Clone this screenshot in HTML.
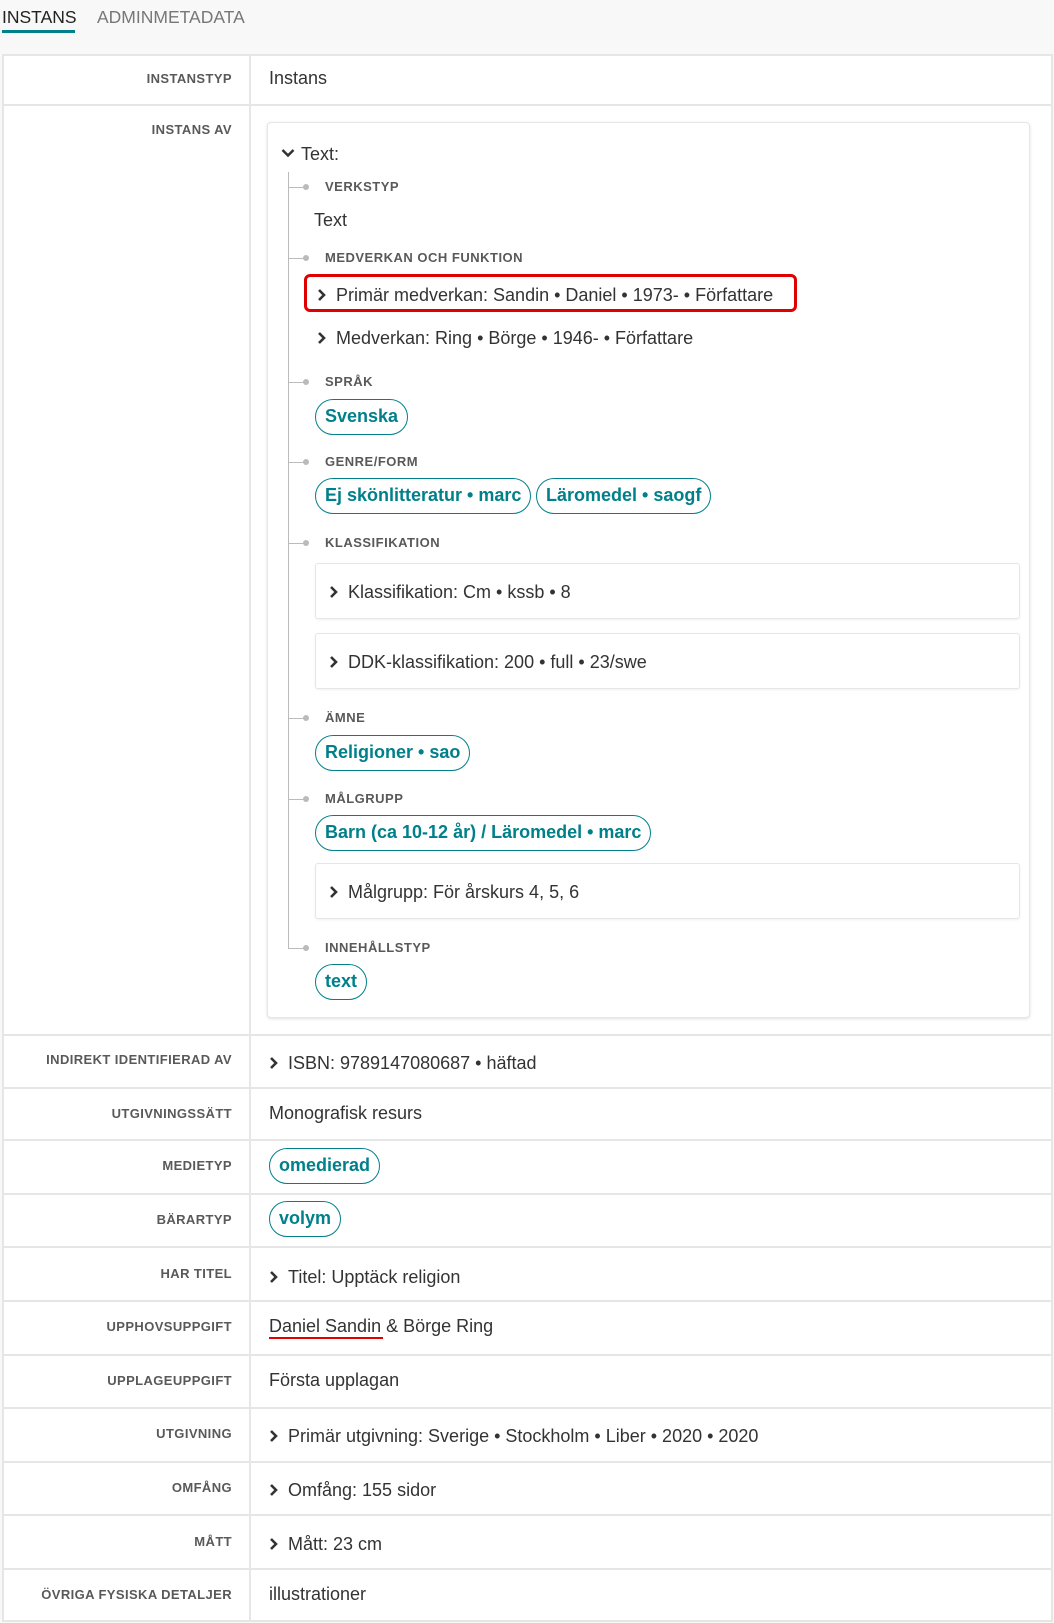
<!DOCTYPE html>
<html><head><meta charset="utf-8"><style>
*{margin:0;padding:0;box-sizing:border-box}
body{width:1054px;height:1623px;background:#f8f8f8;font-family:"Liberation Sans",sans-serif;color:#333;position:relative;overflow:hidden}
.a{position:absolute;white-space:nowrap}
.tab{font-size:17.5px;top:7px}
.tbl{position:absolute;left:2px;top:54px;width:1051px;height:1568px;background:#fff;border:2px solid #e6e6e6;border-bottom-width:2px}
.hl{position:absolute;left:2px;width:1051px;height:2px;background:#e6e6e6}
.vl{position:absolute;left:249px;top:54px;width:2px;height:1568px;background:#e6e6e6}
.lab{position:absolute;right:822px;font-size:13px;font-weight:bold;color:#595959;letter-spacing:.4px;white-space:nowrap;text-align:right}
.val{position:absolute;left:269px;font-size:18px;white-space:nowrap;margin-top:2px}
.chip{position:absolute;height:36px;border:1.5px solid #00808a;border-radius:18px;color:#00808a;font-weight:bold;font-size:18px;line-height:33px;padding:0 9px;white-space:nowrap}
.card{position:absolute;left:267px;top:122px;width:763px;height:896px;border:1px solid #e6e6e6;border-radius:4px;background:#fff;box-shadow:0 1px 3px rgba(0,0,0,.12)}
.tl{position:absolute;font-size:13px;font-weight:bold;color:#595959;letter-spacing:.5px;left:325px;white-space:nowrap}
.br{position:absolute;left:289px;width:16px;height:1px;background:#bbb}
.dot{position:absolute;left:303px;width:6px;height:6px;border-radius:3px;background:#bbb}
.box{position:absolute;left:315px;width:705px;height:56px;border:1px solid #e6e6e6;border-radius:3px;background:#fff;box-shadow:0 1px 2px rgba(0,0,0,.06)}
.ch{display:inline-block;width:9px;height:14px;margin-right:10px;vertical-align:-1px}
</style></head><body>
<div class="a tab" style="left:2px;color:#222">INSTANS</div>
<div class="a" style="left:2px;top:30px;width:73px;height:3px;background:#00808a"></div>
<div class="a tab" style="left:97px;color:#777">ADMINMETADATA</div>

<div class="tbl"></div>
<div class="vl"></div>
<div class="hl" style="top:104px"></div>
<div class="hl" style="top:1034px"></div>
<div class="hl" style="top:1087px"></div>
<div class="hl" style="top:1139px"></div>
<div class="hl" style="top:1193px"></div>
<div class="hl" style="top:1246px"></div>
<div class="hl" style="top:1300px"></div>
<div class="hl" style="top:1354px"></div>
<div class="hl" style="top:1407px"></div>
<div class="hl" style="top:1461px"></div>
<div class="hl" style="top:1514px"></div>
<div class="hl" style="top:1568px"></div>

<div class="lab" style="top:71px">INSTANSTYP</div>
<div class="val" style="top:66px">Instans</div>
<div class="lab" style="top:122px">INSTANS AV</div>

<div class="card"></div>
<div class="a" style="left:281px;top:143px;font-size:18px;margin-top:1px"><svg width="14" height="10" style="margin-right:6px;vertical-align:2px" viewBox="0 0 14 10"><path d="M1.5 2 L7 7.5 L12.5 2" fill="none" stroke="#333" stroke-width="2.5"/></svg>Text:</div>
<div class="a" style="left:288px;top:172px;width:1px;height:777px;background:#bbb"></div>

<div class="br" style="top:187px"></div><div class="dot" style="top:184px"></div>
<div class="tl" style="top:179px">VERKSTYP</div>
<div class="val" style="left:314px;top:208px">Text</div>

<div class="br" style="top:258px"></div><div class="dot" style="top:255px"></div>
<div class="tl" style="top:250px">MEDVERKAN OCH FUNKTION</div>
<div class="a" style="left:304px;top:274px;width:493px;height:38px;border:3px solid #e00000;border-radius:6px"></div>
<div class="val" style="left:317px;top:283px"><svg class="ch" viewBox="0 0 9 14"><path d="M2 2 L7 7 L2 12" fill="none" stroke="#333" stroke-width="2.6"/></svg>Primär medverkan: Sandin • Daniel • 1973- • Författare</div>
<div class="val" style="left:317px;top:326px"><svg class="ch" viewBox="0 0 9 14"><path d="M2 2 L7 7 L2 12" fill="none" stroke="#333" stroke-width="2.6"/></svg>Medverkan: Ring • Börge • 1946- • Författare</div>

<div class="br" style="top:382px"></div><div class="dot" style="top:379px"></div>
<div class="tl" style="top:374px">SPRÅK</div>
<div class="chip" style="left:315px;top:399px">Svenska</div>

<div class="br" style="top:462px"></div><div class="dot" style="top:459px"></div>
<div class="tl" style="top:454px">GENRE/FORM</div>
<div class="chip" style="left:315px;top:478px">Ej skönlitteratur • marc</div>
<div class="chip" style="left:536px;top:478px">Läromedel • saogf</div>

<div class="br" style="top:543px"></div><div class="dot" style="top:540px"></div>
<div class="tl" style="top:535px">KLASSIFIKATION</div>
<div class="box" style="top:563px"></div>
<div class="val" style="left:329px;top:580px"><svg class="ch" viewBox="0 0 9 14"><path d="M2 2 L7 7 L2 12" fill="none" stroke="#333" stroke-width="2.6"/></svg>Klassifikation: Cm • kssb • 8</div>
<div class="box" style="top:633px"></div>
<div class="val" style="left:329px;top:650px"><svg class="ch" viewBox="0 0 9 14"><path d="M2 2 L7 7 L2 12" fill="none" stroke="#333" stroke-width="2.6"/></svg>DDK-klassifikation: 200 • full • 23/swe</div>

<div class="br" style="top:718px"></div><div class="dot" style="top:715px"></div>
<div class="tl" style="top:710px">ÄMNE</div>
<div class="chip" style="left:315px;top:735px">Religioner • sao</div>

<div class="br" style="top:799px"></div><div class="dot" style="top:796px"></div>
<div class="tl" style="top:791px">MÅLGRUPP</div>
<div class="chip" style="left:315px;top:815px">Barn (ca 10-12 år) / Läromedel • marc</div>
<div class="box" style="top:863px"></div>
<div class="val" style="left:329px;top:880px"><svg class="ch" viewBox="0 0 9 14"><path d="M2 2 L7 7 L2 12" fill="none" stroke="#333" stroke-width="2.6"/></svg>Målgrupp: För årskurs 4, 5, 6</div>

<div class="br" style="top:948px"></div><div class="dot" style="top:945px"></div>
<div class="tl" style="top:940px">INNEHÅLLSTYP</div>
<div class="chip" style="left:315px;top:964px">text</div>

<div class="lab" style="top:1052px">INDIREKT IDENTIFIERAD AV</div>
<div class="val" style="top:1051px"><svg class="ch" viewBox="0 0 9 14"><path d="M2 2 L7 7 L2 12" fill="none" stroke="#333" stroke-width="2.6"/></svg>ISBN: 9789147080687 • häftad</div>
<div class="lab" style="top:1106px">UTGIVNINGSSÄTT</div>
<div class="val" style="top:1101px">Monografisk resurs</div>
<div class="lab" style="top:1158px">MEDIETYP</div>
<div class="chip" style="left:269px;top:1148px">omedierad</div>
<div class="lab" style="top:1212px">BÄRARTYP</div>
<div class="chip" style="left:269px;top:1201px">volym</div>
<div class="lab" style="top:1266px">HAR TITEL</div>
<div class="val" style="top:1265px"><svg class="ch" viewBox="0 0 9 14"><path d="M2 2 L7 7 L2 12" fill="none" stroke="#333" stroke-width="2.6"/></svg>Titel: Upptäck religion</div>
<div class="lab" style="top:1319px">UPPHOVSUPPGIFT</div>
<div class="val" style="top:1314px">Daniel Sandin &amp; Börge Ring</div>
<div class="a" style="left:269px;top:1337px;width:114px;height:2px;background:#e00000"></div>
<div class="lab" style="top:1373px">UPPLAGEUPPGIFT</div>
<div class="val" style="top:1368px">Första upplagan</div>
<div class="lab" style="top:1426px">UTGIVNING</div>
<div class="val" style="top:1424px"><svg class="ch" viewBox="0 0 9 14"><path d="M2 2 L7 7 L2 12" fill="none" stroke="#333" stroke-width="2.6"/></svg>Primär utgivning: Sverige • Stockholm • Liber • 2020 • 2020</div>
<div class="lab" style="top:1480px">OMFÅNG</div>
<div class="val" style="top:1478px"><svg class="ch" viewBox="0 0 9 14"><path d="M2 2 L7 7 L2 12" fill="none" stroke="#333" stroke-width="2.6"/></svg>Omfång: 155 sidor</div>
<div class="lab" style="top:1534px">MÅTT</div>
<div class="val" style="top:1532px"><svg class="ch" viewBox="0 0 9 14"><path d="M2 2 L7 7 L2 12" fill="none" stroke="#333" stroke-width="2.6"/></svg>Mått: 23 cm</div>
<div class="lab" style="top:1587px">ÖVRIGA FYSISKA DETALJER</div>
<div class="val" style="top:1582px">illustrationer</div>
</body></html>
